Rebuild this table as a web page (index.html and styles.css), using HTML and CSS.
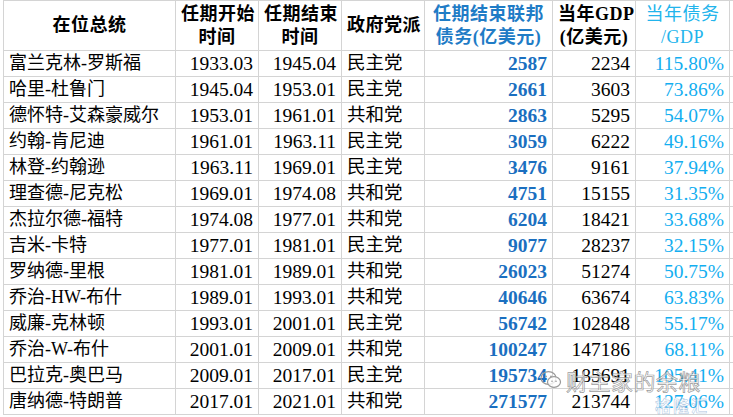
FILE: index.html
```html
<!DOCTYPE html>
<html lang="zh">
<head>
<meta charset="utf-8">
<link rel="stylesheet" href="styles.css">
</head>
<body>
<div class="sheet">
<table class="grid">
  <colgroup>
    <col class="c-name"><col class="c-date"><col class="c-date"><col class="c-party"><col class="c-debt"><col class="c-gdp"><col class="c-ratio"><col class="c-extra">
  </colgroup>
  <thead>
    <tr>
      <th>在位总统</th>
      <th>任期开始<br>时间</th>
      <th>任期结束<br>时间</th>
      <th>政府党派</th>
      <th class="h-debt">任期结束联邦<br>债务(亿美元)</th>
      <th>当年GDP<br>(亿美元)</th>
      <th class="h-ratio">当年债务<br>/GDP</th>
      <th></th>
    </tr>
  </thead>
  <tbody>
    <tr><td class="name">富兰克林-罗斯福</td><td class="num">1933.03</td><td class="num">1945.04</td><td class="party">民主党</td><td class="debt">2587</td><td class="num">2234</td><td class="ratio">115.80%</td><td></td></tr>
    <tr><td class="name">哈里-杜鲁门</td><td class="num">1945.04</td><td class="num">1953.01</td><td class="party">民主党</td><td class="debt">2661</td><td class="num">3603</td><td class="ratio">73.86%</td><td></td></tr>
    <tr><td class="name">德怀特-艾森豪威尔</td><td class="num">1953.01</td><td class="num">1961.01</td><td class="party">共和党</td><td class="debt">2863</td><td class="num">5295</td><td class="ratio">54.07%</td><td></td></tr>
    <tr><td class="name">约翰-肯尼迪</td><td class="num">1961.01</td><td class="num">1963.11</td><td class="party">民主党</td><td class="debt">3059</td><td class="num">6222</td><td class="ratio">49.16%</td><td></td></tr>
    <tr><td class="name">林登-约翰逊</td><td class="num">1963.11</td><td class="num">1969.01</td><td class="party">民主党</td><td class="debt">3476</td><td class="num">9161</td><td class="ratio">37.94%</td><td></td></tr>
    <tr><td class="name">理查德-尼克松</td><td class="num">1969.01</td><td class="num">1974.08</td><td class="party">共和党</td><td class="debt">4751</td><td class="num">15155</td><td class="ratio">31.35%</td><td></td></tr>
    <tr><td class="name">杰拉尔德-福特</td><td class="num">1974.08</td><td class="num">1977.01</td><td class="party">共和党</td><td class="debt">6204</td><td class="num">18421</td><td class="ratio">33.68%</td><td></td></tr>
    <tr><td class="name">吉米-卡特</td><td class="num">1977.01</td><td class="num">1981.01</td><td class="party">民主党</td><td class="debt">9077</td><td class="num">28237</td><td class="ratio">32.15%</td><td></td></tr>
    <tr><td class="name">罗纳德-里根</td><td class="num">1981.01</td><td class="num">1989.01</td><td class="party">共和党</td><td class="debt">26023</td><td class="num">51274</td><td class="ratio">50.75%</td><td></td></tr>
    <tr><td class="name">乔治-HW-布什</td><td class="num">1989.01</td><td class="num">1993.01</td><td class="party">共和党</td><td class="debt">40646</td><td class="num">63674</td><td class="ratio">63.83%</td><td></td></tr>
    <tr><td class="name">威廉-克林顿</td><td class="num">1993.01</td><td class="num">2001.01</td><td class="party">民主党</td><td class="debt">56742</td><td class="num">102848</td><td class="ratio">55.17%</td><td></td></tr>
    <tr><td class="name">乔治-W-布什</td><td class="num">2001.01</td><td class="num">2009.01</td><td class="party">共和党</td><td class="debt">100247</td><td class="num">147186</td><td class="ratio">68.11%</td><td></td></tr>
    <tr><td class="name">巴拉克-奥巴马</td><td class="num">2009.01</td><td class="num">2017.01</td><td class="party">民主党</td><td class="debt">195734</td><td class="num">185691</td><td class="ratio">105.41%</td><td></td></tr>
    <tr><td class="name">唐纳德-特朗普</td><td class="num">2017.01</td><td class="num">2021.01</td><td class="party">共和党</td><td class="debt">271577</td><td class="num">213744</td><td class="ratio">127.06%</td><td></td></tr>
  </tbody>
</table>
<div class="watermark">
  <svg class="wm-icon" width="22" height="20" viewBox="0 0 22 20">
    <ellipse cx="8.5" cy="8" rx="7.5" ry="6.3" fill="none" stroke="#999" stroke-width="1.2"/>
    <ellipse cx="14" cy="12" rx="6.5" ry="5.3" fill="rgba(255,255,255,0.8)" stroke="#999" stroke-width="1.2"/>
    <circle cx="6" cy="6.5" r="0.9" fill="#999"/>
    <circle cx="11" cy="6.5" r="0.9" fill="#999"/>
    <circle cx="12" cy="11.3" r="0.8" fill="#999"/>
    <circle cx="16" cy="11.3" r="0.8" fill="#999"/>
  </svg>
  <span class="wm-text">财主家的余粮</span>
</div>
<div class="wm-logo">格隆汇</div>
</div>
</body>
</html>
```

FILE: styles.css
```css
html, body {
  margin: 0;
  padding: 0;
  background: #ffffff;
}

.sheet {
  position: relative;
  width: 733px;
  height: 417px;
  overflow: hidden;
  padding: 0 0 0 3px;
  box-sizing: border-box;
}

.grid {
  border-collapse: collapse;
  table-layout: fixed;
  width: 800px;
  font-family: "Liberation Serif", "Noto Sans CJK SC", serif;
  font-size: 18px;
  color: #000;
}

.c-name { width: 172px; }
.c-date { width: 83px; }
.c-party { width: 83px; }
.c-debt { width: 128px; }
.c-gdp { width: 83px; }
.c-ratio { width: 94px; }
.c-extra { width: 73px; }

.grid th,
.grid td {
  border: 1px solid #d4d4d4;
  padding: 0 5px;
  white-space: nowrap;
  overflow: hidden;
}

.grid th {
  height: 49px;
  line-height: 23px;
  font-weight: bold;
  text-align: center;
  vertical-align: middle;
  letter-spacing: 0.5px;
}

.grid td {
  height: 25px;
  line-height: 25px;
  vertical-align: middle;
}

.h-debt { color: #1f7cc6; }
.h-ratio { color: #22b4ec; font-weight: normal !important; }

.name { text-align: left; padding-left: 5px; }
.num {
  text-align: right;
  padding-right: 5px;
  font-size: 19.5px;
}
.party { text-align: left; padding-left: 4px; font-size: 18.5px; }
.debt {
  text-align: right;
  font-weight: bold;
  color: #1a6fc0;
  padding-right: 4px;
  font-size: 19.5px;
}
.ratio {
  text-align: right;
  color: #13aef0;
  padding-right: 4px;
  font-size: 19.5px;
}

.watermark {
  position: absolute;
  left: 540px;
  top: 367px;
  display: flex;
  align-items: center;
  gap: 4px;
}

.wm-icon { display: block; }

.wm-text {
  font-family: "Noto Sans CJK SC", sans-serif;
  font-size: 22px;
  line-height: 26px;
  color: rgba(255, 255, 255, 0.7);
  -webkit-text-stroke: 0.7px rgba(110, 110, 110, 0.7);
  letter-spacing: 0.5px;
}

.wm-logo {
  position: absolute;
  left: 655px;
  top: 395px;
  font-family: "Noto Sans CJK SC", sans-serif;
  font-size: 16px;
  line-height: 20px;
  font-weight: bold;
  color: rgba(255, 255, 255, 0.6);
  -webkit-text-stroke: 0.5px rgba(130, 170, 210, 0.7);
  letter-spacing: 2px;
}
```
